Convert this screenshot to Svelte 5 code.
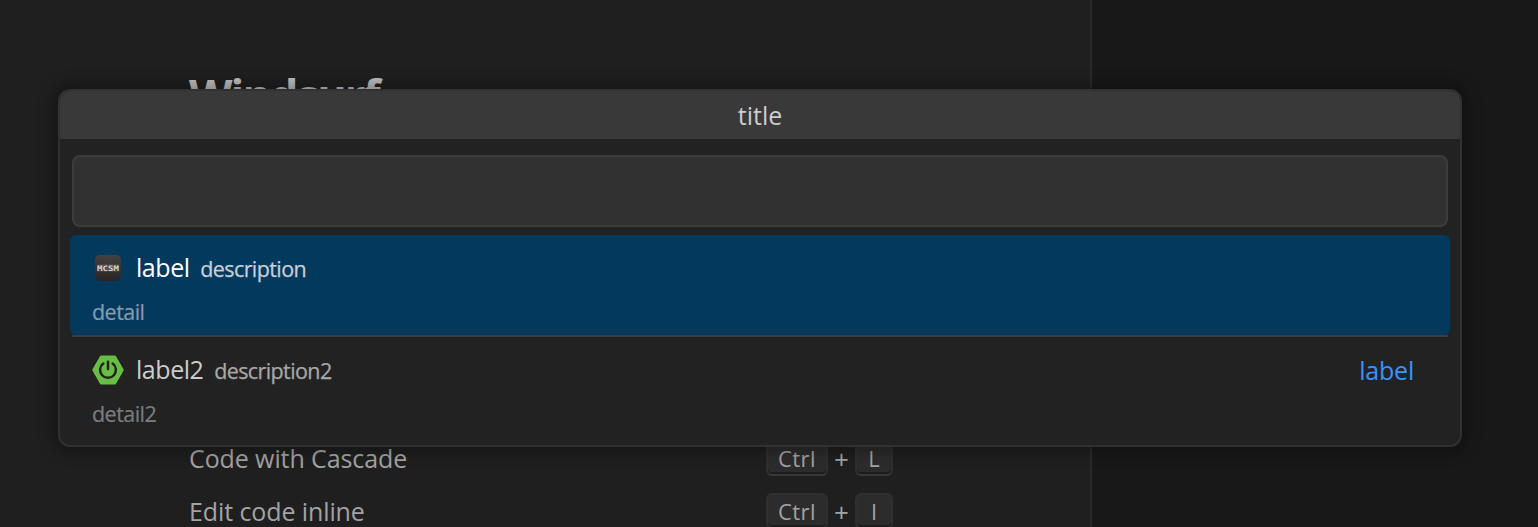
<script>
  const shortcuts = [
    { name: 'Code with Cascade', key: 'L' },
    { name: 'Edit code inline', key: 'I' }
  ];
</script>

<div class="workbench">
  <main class="editor">
    <h1>Windsurf</h1>
    <div class="shortcuts">
      {#each shortcuts as item}
        <div class="shortcut">
          <span class="command">{item.name}</span>
          <span class="keys"><kbd class="ctrl">Ctrl</kbd><span class="plus">+</span><kbd class="letter">{item.key}</kbd></span>
        </div>
      {/each}
    </div>
  </main>
  <aside></aside>

  <section class="quick-pick">
    <header><span>title</span></header>
    <div class="input"></div>
    <div class="list">
      <div class="row selected">
        <div class="line">
          <svg class="icon" width="32" height="32" viewBox="0 0 32 32">
            <defs>
              <linearGradient id="tile" x1="0" y1="0" x2="0" y2="1">
                <stop offset="0" stop-color="#454140" />
                <stop offset="1" stop-color="#272525" />
              </linearGradient>
            </defs>
            <rect x="3" y="3" width="26" height="26" rx="5" fill="url(#tile)" />
            <rect x="5" y="12.5" width="22" height="7" fill="#686666" opacity=".55" />
            <text class="logo" x="5" y="18.6" textLength="22" lengthAdjust="spacingAndGlyphs">MCSM</text>
          </svg>
          <span class="label">label</span>
          <span class="description">description</span>
        </div>
        <div class="detail">detail</div>
      </div>
      <div class="row">
        <div class="line">
          <svg class="icon" width="32" height="32" viewBox="0 0 32 32">
            <path d="M9.2 1.6h13.6q.8 0 1.2.7l7.5 13q.4.7 0 1.4l-7.5 13q-.4.7-1.2.7H9.2q-.8 0-1.2-.7l-7.5-13q-.4-.7 0-1.4l7.5-13q.4-.7 1.2-.7z" fill="#68bd45" />
            <path d="M11.3 9.6a7.9 7.9 0 1 0 9.4 0M16 7.8v7.2" fill="none" stroke="#222" stroke-width="2.5" stroke-linecap="round" />
          </svg>
          <span class="label">label2</span>
          <span class="description">description2</span>
          <span class="separator">label</span>
        </div>
        <div class="detail">detail2</div>
      </div>
    </div>
  </section>
</div>

<style>
  :global(body) { background: #1f1f1f; overflow: hidden; }
  .workbench {
    position: relative;
    display: flex;
    width: 1538px;
    height: 527px;
    overflow: hidden;
    background: #1f1f1f;
    color: #ccc;
    font-family: "Open Sans", "Noto Sans", sans-serif;
    font-size: 25px;
    white-space: nowrap;
  }
  .editor {
    box-sizing: border-box;
    width: 1092px;
    padding: 64px 197px 0 189px;
    border-right: 2px solid #2b2b2b;
  }
  aside { flex: 1; background: #181818; }
  h1 {
    margin: 0;
    height: 376px;
    font-size: 45px;
    line-height: 62px;
    font-weight: 700;
    color: #c0c0c0;
    letter-spacing: -1.9px;
  }
  .shortcuts { display: grid; gap: 17px; }
  .shortcut { display: flex; justify-content: space-between; height: 36px; line-height: 36px; color: #a3a3a3; }
  .command { letter-spacing: -0.1px; }
  .keys { display: flex; }
  kbd {
    box-sizing: border-box;
    height: 36px;
    border: 2px solid #2f2f2f;
    border-bottom-color: #373737;
    border-radius: 6px;
    background: #2c2c2c;
    box-shadow: inset 0 -2px 0 #1d1d1d;
    font: 22px/33px "Open Sans", sans-serif;
    text-align: center;
    color: #a3a3a3;
  }
  .ctrl { width: 62px; letter-spacing: 0.5px; }
  .letter { width: 38px; }
  .plus { width: 27px; text-align: center; font-size: 26px; line-height: 39px; }

  .quick-pick {
    position: absolute;
    left: 58px;
    top: 89px;
    box-sizing: border-box;
    width: 1404px;
    height: 358px;
    border: 2px solid #313131;
    border-radius: 12px;
    overflow: hidden;
    background: #222;
    box-shadow: 0 0 16px 4px rgba(0, 0, 0, 0.36);
  }
  header { height: 48px; background: #393939; text-align: center; line-height: 48px; }
  .input {
    box-sizing: border-box;
    height: 72px;
    margin: 16px 12px 8px;
    border: 2px solid #3c3c3c;
    border-radius: 8px;
    background: #313131;
  }
  .list { padding: 0 10px; }
  .row { box-sizing: border-box; height: 100px; padding: 12px 36px 0 22px; border-radius: 6px; }
  .selected { background: #04395e; color: #fff; }
  .row + .row {
    height: 102px;
    margin: 0 2px;
    padding: 12px 34px 0 20px;
    border-top: 2px solid #3b3b3b;
    border-radius: 0;
  }
  .line { display: flex; align-items: center; height: 42px; line-height: 42px; }
  .icon { flex: none; margin-right: 12px; }
  .logo { font: bold 7.5px "DejaVu Sans Mono", monospace; fill: #d0d0d0; }
  .label { padding-bottom: 2px; letter-spacing: -0.45px; }
  .description { margin-left: 10.7px; padding-top: 2px; font-size: 21.5px; letter-spacing: -0.6px; color: #a8a8a8; -webkit-text-stroke: 0.25px currentColor; }
  .selected .description { color: #c5d1da; }
  .detail { height: 44px; line-height: 46px; font-size: 21.5px; letter-spacing: -0.55px; color: #7c7c7c; -webkit-text-stroke: 0.2px currentColor; }
  .selected .detail { color: #829caf; }
  .separator { margin-left: auto; letter-spacing: -0.2px; color: #3794ff; }
</style>
